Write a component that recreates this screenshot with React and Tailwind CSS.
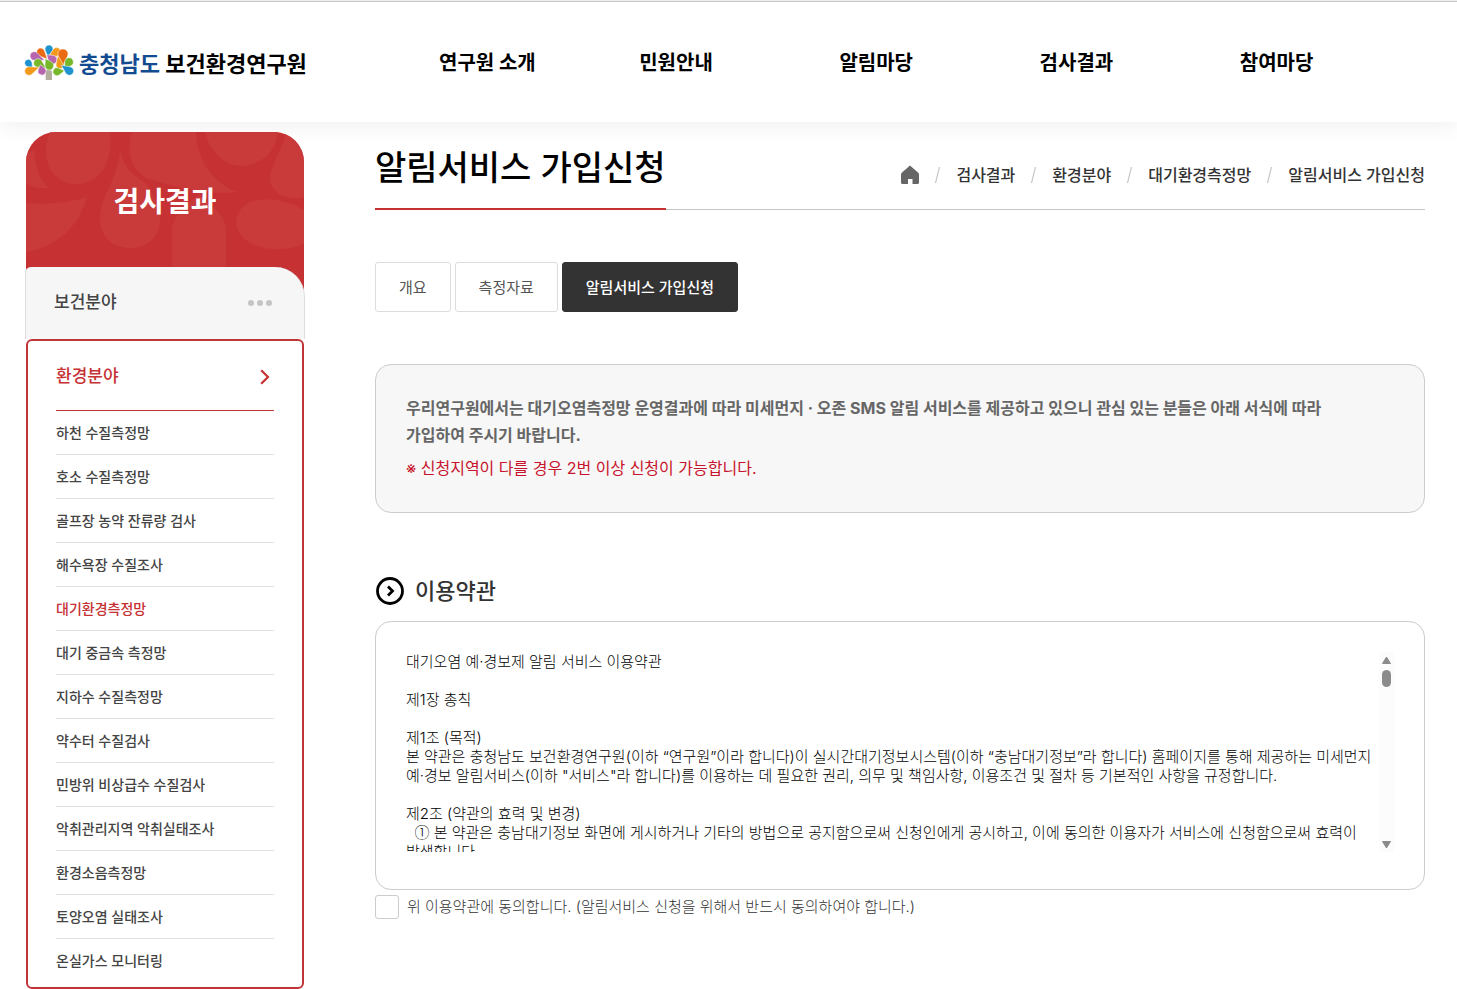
import { useState } from "react";

const NAV = ["연구원 소개", "민원안내", "알림마당", "검사결과", "참여마당"];

const CRUMBS = ["검사결과", "환경분야", "대기환경측정망", "알림서비스 가입신청"];

const SIDE_MENU = [
  "하천 수질측정망",
  "호소 수질측정망",
  "골프장 농약 잔류량 검사",
  "해수욕장 수질조사",
  "대기환경측정망",
  "대기 중금속 측정망",
  "지하수 수질측정망",
  "약수터 수질검사",
  "민방위 비상급수 수질검사",
  "악취관리지역 악취실태조사",
  "환경소음측정망",
  "토양오염 실태조사",
  "온실가스 모니터링",
];

const TABS = ["개요", "측정자료", "알림서비스 가입신청"];

const TERMS_INTRO = `대기오염 예·경보제 알림 서비스 이용약관

제1장 총칙

제1조 (목적)
본 약관은 충청남도 보건환경연구원(이하 “연구원”이라 합니다)이 실시간대기정보시스템(이하 “충남대기정보”라 합니다) 홈페이지를 통해 제공하는 미세먼지 예·경보 알림서비스(이하 "서비스"라 합니다)를 이용하는 데 필요한 권리, 의무 및 책임사항, 이용조건 및 절차 등 기본적인 사항을 규정합니다.

제2조 (약관의 효력 및 변경)
`;

const TERMS_ITEM =
  " 본 약관은 충남대기정보 화면에 게시하거나 기타의 방법으로 공지함으로써 신청인에게 공시하고, 이에 동의한 이용자가 서비스에 신청함으로써 효력이 발생합니다.";

// bulb centre, bulb radius, tip
const LEAVES = [
  { x: 87, y: 27, r: 12, tx: 84, ty: 52, fill: "#1f93d0" },
  { x: 62, y: 36, r: 12, tx: 82, ty: 58, fill: "#ea6a14" },
  { x: 43, y: 48, r: 13, tx: 74, ty: 61, fill: "#b765ae" },
  { x: 25, y: 69, r: 11, tx: 38, ty: 88, fill: "#1f93d0" },
  { x: 54, y: 69, r: 13, tx: 78, ty: 84, fill: "#76b82a" },
  { x: 27, y: 93, r: 13, tx: 58, ty: 82, fill: "#f39a1a" },
  { x: 66, y: 93, r: 12, tx: 61, ty: 74, fill: "#b765ae" },
  { x: 110, y: 36, r: 13, tx: 88, ty: 46, fill: "#f39a1a" },
  { x: 98, y: 59, r: 13, tx: 80, ty: 44, fill: "#b765ae" },
  { x: 88, y: 77, r: 13, tx: 76, ty: 56, fill: "#76b82a" },
  { x: 120, y: 74, r: 12, tx: 114, ty: 46, fill: "#f39a1a" },
  { x: 129, y: 42, r: 15, tx: 130, ty: 74, fill: "#ea6a14" },
  { x: 147, y: 66, r: 13, tx: 134, ty: 88, fill: "#76b82a" },
  { x: 148, y: 93, r: 13, tx: 124, ty: 76, fill: "#1f93d0" },
  { x: 111, y: 95, r: 12, tx: 133, ty: 92, fill: "#76b82a" },
];

function leafPath({ x, y, r, tx, ty }) {
  const d = Math.hypot(tx - x, ty - y);
  const a = Math.atan2(ty - y, tx - x);
  const b = Math.acos(Math.min(1, r / d));
  const x1 = x + r * Math.cos(a + b);
  const y1 = y + r * Math.sin(a + b);
  const x2 = x + r * Math.cos(a - b);
  const y2 = y + r * Math.sin(a - b);
  return `M${tx} ${ty}L${x1} ${y1}A${r} ${r} 0 1 1 ${x2} ${y2}Z`;
}

function TreeLogo() {
  return (
    <svg viewBox="12 12 150 108" className="w-[50px] h-9 shrink-0" aria-hidden="true">
      <path d="M77 120V98q0-8 9-10q10 2 10 10v22z" fill="#b3ae9d" />
      {LEAVES.map((leaf, i) => (
        <path key={i} d={leafPath(leaf)} fill={leaf.fill} stroke="#fff" strokeWidth="1.5" />
      ))}
    </svg>
  );
}

function SidePattern() {
  return (
    <svg
      viewBox="0 0 278 158"
      className="absolute inset-0 w-full h-full"
      fill="#c93a3b"
      preserveAspectRatio="none"
      aria-hidden="true"
    >
      <path d="M24 0C14 22 22 52 50 52S88 22 84 0z" />
      <path d="M0 51C8 56 15 57 23 56C14 50 10 36 8 18L0 22z" />
      <path d="M0 71C24 73 44 70 61 65C54 92 34 114 0 120z" />
      <path d="M94 16C92 50 74 62 74 88C75 107 88 116 104 116C122 116 134 104 134 88C134 72 128 62 118 50C106 42 96 34 94 16z" />
      <path d="M106 0C98 24 108 42 126 48C150 55 186 64 211 60C186 50 172 30 170 0z" />
      <path d="M179 0C184 22 200 34 216 34S250 22 252 0z" />
      <path d="M260 0C256 20 243 34 244 48C246 62 262 70 278 65V0z" />
      <path d="M278 78C262 68 240 64 224 70C208 78 206 94 216 105C232 120 260 120 278 112z" />
      <path d="M146 158V98C146 84 160 74 173 62C186 74 200 84 200 98V158z" />
    </svg>
  );
}

export default function App() {
  const [tab, setTab] = useState(2);
  const [agree, setAgree] = useState(false);

  return (
    <div className="min-h-screen bg-white border-t border-[#f0f0f0] text-[#333] font-[Inter,'Noto_Sans_CJK_KR',sans-serif]">
      {/* Header */}
      <header className="flex items-center h-[121px] border-t border-[#c8c8c8] bg-white pl-6 pr-[17px] shadow-[0_5px_20px_rgba(0,0,0,0.06)]">
        <a href="#" className="flex items-center gap-[5px] w-[281px] shrink-0 whitespace-nowrap">
          <TreeLogo />
          <span className="pt-1 text-[22px] leading-8 font-bold text-black">
            <span className="text-[#134b91]">충청남도</span> 보건환경연구원
          </span>
        </a>
        <nav className="flex-1 grid grid-cols-5 ml-[134px] pt-px">
          {NAV.map((item) => (
            <a key={item} href="#" className="text-xl leading-8 font-bold text-black whitespace-nowrap">
              {item}
            </a>
          ))}
        </nav>
      </header>

      <div className="flex items-start gap-[70px] pl-[25px] pr-8 pt-[10px]">
        {/* Sidebar */}
        <aside className="w-[280px] shrink-0">
          <div className="relative h-[158px] mx-px rounded-t-[30px] bg-[#c63133] overflow-hidden">
            <SidePattern />
            <h2 className="relative pt-[50px] text-[28px] leading-10 font-bold text-white text-center">검사결과</h2>
          </div>
          <a
            href="#"
            className="relative -mt-[23px] flex items-center justify-between h-[72px] pl-7 pr-8 rounded-tl-md rounded-tr-[30px] bg-[#f6f6f6] border-x border-[#ddd] text-[17px] font-medium text-[#444]"
          >
            보건분야
            <svg viewBox="0 0 24 6" className="w-6 h-[6px]" fill="#c4c4c4" aria-hidden="true">
              <circle cx="3" cy="3" r="3" />
              <circle cx="12" cy="3" r="3" />
              <circle cx="21" cy="3" r="3" />
            </svg>
          </a>
          <div className="mx-px px-7 pb-[5px] rounded-md border-2 border-[#c03538] bg-white">
            <a
              href="#"
              className="flex items-center justify-between h-[70px] pt-[2px] pr-1 border-b border-[#c03538] text-[17px] font-medium text-[#c63133]"
            >
              환경분야
              <svg viewBox="0 0 10 16" className="w-[10px] h-4" fill="none" stroke="#c63133" strokeWidth="2.2" aria-hidden="true">
                <path d="M1.2 1.2L8 8L1.2 14.8" />
              </svg>
            </a>
            <ul>
              {SIDE_MENU.map((item) => (
                <li key={item} className="border-b border-[#e2e2e2] last:border-b-0">
                  <a
                    href="#"
                    className={`flex items-center h-[43px] text-sm font-medium ${
                      item === "대기환경측정망" ? "text-[#c63133]" : "text-[#444]"
                    }`}
                  >
                    {item}
                  </a>
                </li>
              ))}
            </ul>
          </div>
        </aside>

        {/* Content */}
        <main className="flex-1 min-w-0">
          <div className="flex items-stretch justify-between h-[78px] border-b border-[#c4c4c4]">
            <h1 className="-mb-px pt-[10px] border-b-2 border-[#c63133] text-[34px] leading-[52px] font-medium text-black whitespace-nowrap">
              알림서비스 가입신청
            </h1>
            <ol className="flex items-center gap-4 pt-2 text-base font-medium text-[#333] whitespace-nowrap">
              <li>
                <a href="#" aria-label="홈">
                  <svg viewBox="0 0 18 20" className="w-[18px] h-5" fill="#666" aria-hidden="true">
                    <path d="M9 0.500L17 7.500Q18 8.500 18 9.500V17.500Q18 19 16.500 19H11.500V14H7V19H1.500Q0 19 0 17.500V9.500Q0 8.500 1 7.500Z" />
                  </svg>
                </a>
              </li>
              {CRUMBS.map((c) => (
                <li key={c} className="flex items-center gap-4">
                  <svg viewBox="0 0 5 16" className="w-[5px] h-4" stroke="#c8c8cc" strokeWidth="1.2" aria-hidden="true">
                    <path d="M4.500 0L0.500 16" />
                  </svg>
                  <a href="#">{c}</a>
                </li>
              ))}
            </ol>
          </div>

          {/* Tabs */}
          <div className="flex gap-1 mt-[52px]">
            {TABS.map((t, i) => (
              <button
                key={t}
                type="button"
                onClick={() => setTab(i)}
                className={`h-[50px] px-[23px] pt-[2px] rounded-[3px] border text-[15px] ${
                  tab === i
                    ? "bg-[#333] border-[#333] text-white font-medium"
                    : "bg-white border-[#ddd] text-[#555]"
                }`}
              >
                {t}
              </button>
            ))}
          </div>

          {/* Notice */}
          <div className="mt-[52px] pl-[30px] pr-[60px] pt-[30px] pb-[30px] rounded-2xl border border-[#ccc] bg-[#f7f7f7]">
            <p className="text-base leading-[27px] font-bold text-[#666] break-keep">
              우리연구원에서는 대기오염측정망 운영결과에 따라 미세먼지 · 오존 SMS 알림 서비스를 제공하고 있으니 관심 있는 분들은 아래 서식에 따라
              가입하여 주시기 바랍니다.
            </p>
            <p className="mt-[6px] text-base leading-[27px] text-[#c7132b]">
              ※ 신청지역이 다를 경우 2번 이상 신청이 가능합니다.
            </p>
          </div>

          {/* Terms */}
          <h3 className="flex items-center gap-[10px] mt-[62px] text-[22px] leading-8 font-medium text-[#333]">
            <svg viewBox="0 0 30 30" className="w-[30px] h-[30px]" fill="none" stroke="#000" aria-hidden="true">
              <circle cx="15" cy="15" r="12.500" strokeWidth="2.800" />
              <path d="M13 10.500L17.500 15L13 19.500" strokeWidth="2.800" />
            </svg>
            이용약관
          </h3>
          <div className="flex mt-[14px] px-[30px] pt-[30px] pb-[37px] rounded-2xl border border-[#ccc]">
            <div
              tabIndex={0}
              role="region"
              aria-label="이용약관"
              className="flex-1 min-w-0 h-[200px] overflow-hidden outline-none whitespace-pre-wrap break-keep text-[15px] leading-[19px] font-light text-black"
            >
              {TERMS_INTRO}
              {"  "}
              <span className="font-['Noto_Sans_CJK_KR',sans-serif] leading-none">①</span>
              {TERMS_ITEM}
            </div>
            <svg viewBox="0 0 15 200" className="w-[15px] h-[200px]" fill="#8b8b8b" aria-hidden="true">
              <rect width="15" height="200" fill="#fcfcfc" />
              <path d="M7.500 5L11.500 11.500H3.500Z" stroke="#8b8b8b" strokeLinejoin="round" />
              <rect x="3" y="18" width="9" height="17" rx="4.500" />
              <path d="M7.500 196L11.500 189.500H3.500Z" stroke="#8b8b8b" strokeLinejoin="round" />
            </svg>
          </div>
          <label className="flex items-center gap-2 mt-[5px] text-[15px] leading-6 font-light text-[#333]">
            <input
              type="checkbox"
              checked={agree}
              onChange={(e) => setAgree(e.target.checked)}
              className="appearance-none w-6 h-6 rounded-[3px] border border-[#ccc] bg-white checked:bg-[#333]"
            />
            위 이용약관에 동의합니다. (알림서비스 신청을 위해서 반드시 동의하여야 합니다.)
          </label>
        </main>
      </div>
    </div>
  );
}
